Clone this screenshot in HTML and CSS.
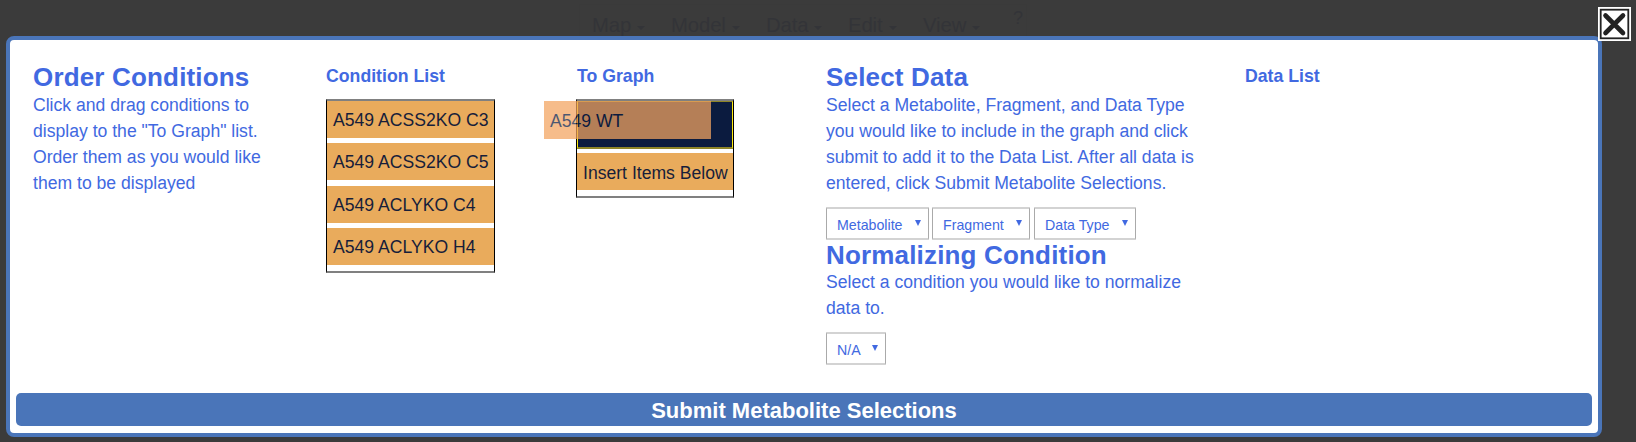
FILE: index.html
```
<!DOCTYPE html>
<html lang="en">
<head>
<meta charset="utf-8">
<title>Graph Selections</title>
<link rel="stylesheet" href="styles.css">
</head>
<body>
<nav class="menu">
  <span class="menu-item map">Map<i class="caret"></i></span>
  <span class="menu-item model">Model<i class="caret"></i></span>
  <span class="menu-item data">Data<i class="caret"></i></span>
  <span class="menu-item edit">Edit<i class="caret"></i></span>
  <span class="menu-item view">View<i class="caret"></i></span>
  <span class="help">?</span>
</nav>
<main class="panel">
  <div class="columns">
    <section class="order">
      <h2 class="title">Order Conditions</h2>
      <p class="copy">Click and drag conditions to<br>display to the "To Graph" list.<br>Order them as you would like<br>them to be displayed</p>
    </section>
    <section class="conditions">
      <h3 class="label">Condition List</h3>
      <ul class="list">
        <li class="item">A549 ACSS2KO C3</li>
        <li class="item">A549 ACSS2KO C5</li>
        <li class="item">A549 ACLYKO C4</li>
        <li class="item">A549 ACLYKO H4</li>
      </ul>
    </section>
    <section class="graph">
      <h3 class="label">To Graph</h3>
      <ul class="list graph-list">
        <li class="placeholder"></li>
        <li class="item">Insert Items Below</li>
      </ul>
      <div class="dragged">A549 WT</div>
    </section>
    <section class="select-data">
      <h2 class="title">Select Data</h2>
      <p class="copy">Select a Metabolite, Fragment, and Data Type<br>you would like to include in the graph and click<br>submit to add it to the Data List. After all data is<br>entered, click Submit Metabolite Selections.</p>
      <div class="selects">
        <button class="select metabolite">Metabolite<i class="arrow"></i></button>
        <button class="select fragment">Fragment<i class="arrow"></i></button>
        <button class="select type">Data Type<i class="arrow"></i></button>
      </div>
      <h2 class="title normal-title">Normalizing Condition</h2>
      <p class="copy">Select a condition you would like to normalize<br>data to.</p>
      <div class="selects">
        <button class="select na">N/A<i class="arrow"></i></button>
      </div>
    </section>
    <section class="data-list">
      <h3 class="label">Data List</h3>
    </section>
  </div>
  <button class="submit">Submit Metabolite Selections</button>
</main>
<svg class="close" viewBox="0 0 33 34">
  <rect width="33" height="34" fill="#fff"/>
  <rect x="2.7" y="2.7" width="27.6" height="28.6" fill="#fff" stroke="#222" stroke-width="1.8"/>
  <path d="M7.5 8.5L25 26M25 8.5L7.5 26" stroke="#222" stroke-width="4.6" stroke-linecap="round"/>
</svg>
</body>
</html>
```
FILE: styles.css
```
* { box-sizing: border-box; }
body {
  margin: 0;
  height: 442px;
  overflow: hidden;
  position: relative;
  padding: 36px 0 0 6px;
  background: #3b3b3b;
  font-family: "Liberation Sans", Arial, sans-serif;
  color: #4169e1;
}
h2, h3, p, ul { margin: 0; padding: 0; }
.menu {
  position: absolute;
  left: 579px;
  top: 4px;
  width: 448px;
  height: 32px;
  display: flex;
  padding-left: 12px;
  border: 1px solid #3a3a3a;
  border-bottom: 0;
  color: #333438;
  font-size: 20.3px;
  line-height: 41px;
}
.menu-item { display: flex; height: 41px; align-items: center; gap: 6px; letter-spacing: -.1px; }
.map { width: 79px; }
.model { width: 95px; }
.data { width: 82px; }
.edit { width: 75px; }
.view { width: 90px; }
.caret { border: 4px solid transparent; border-top-color: #333438; border-bottom: 0; margin-top: 4px; }
.help { font-size: 18px; line-height: 26px; }
.panel {
  width: 1596px;
  height: 401px;
  display: flex;
  flex-direction: column;
  justify-content: space-between;
  padding: 21px 6px 7px;
  background: #fff;
  border: 4px solid #4a75b9;
  border-radius: 8px;
}
.columns { display: flex; padding-left: 17px; }
.order { width: 293px; }
.conditions { width: 250px; }
.graph { width: 250px; position: relative; }
.graph .label { padding-left: 1px; }
.select-data { width: 419px; }
.title { font-size: 26px; line-height: 32px; margin-bottom: -1px; letter-spacing: .17px; white-space: nowrap; }
.normal-title { line-height: 30px; }
.copy { font-size: 17.6px; line-height: 26px; white-space: nowrap; }
.label { font-size: 17.7px; line-height: 30px; height: 38px; }
.list { list-style: none; width: 169px; height: 174px; border: 1px solid #000; border-top: 2px solid #808080; border-bottom: 2px solid #808080; }
.graph-list { width: 158px; height: 99px; }
.item { height: 37px; margin-bottom: 5.3px; padding-left: 6px; background: #e9ab5c; color: #171e3a; font-size: 17.6px; line-height: 38px; white-space: nowrap; }
.graph-list .item { line-height: 40px; }
.placeholder { height: 48px; margin-bottom: 4px; background: #0b1b3f; border: 1px solid #fde910; border-top: 1px solid #8d8427; border-bottom: 2px solid #8d8427; }
.dragged { position: absolute; left: -32px; top: 40px; width: 167px; height: 38px; padding-left: 6px; background: #f4a460; color: #0b1b3f; opacity: .73; font-size: 17.6px; line-height: 40px; }
.selects { display: flex; padding-top: 11px; }
.select { height: 33px; display: flex; justify-content: space-between; padding: 0 7px 0 10px; border: 1px solid #aaa; border-top: 2px solid #d3d3d3; border-bottom: 2px solid #d3d3d3; border-radius: 1px; background: #fff; color: #4169e1; font: 14.2px/32px "Liberation Sans", Arial, sans-serif; }
.arrow { border: 3.5px solid transparent; border-top: 6px solid #4169e1; border-bottom: 0; margin-top: 11px; }
.metabolite { width: 103px; margin-right: 3px; }
.fragment { width: 98px; margin-right: 4px; }
.type { width: 102px; }
.na { width: 60px; }
.submit { height: 33px; border: 0; border-radius: 5px; background: #4a75b9; color: #fff; font: bold 22px/35px "Liberation Sans", Arial, sans-serif; padding: 0; }
.close { position: absolute; left: 1598px; top: 7px; width: 33px; height: 34px; }
```
